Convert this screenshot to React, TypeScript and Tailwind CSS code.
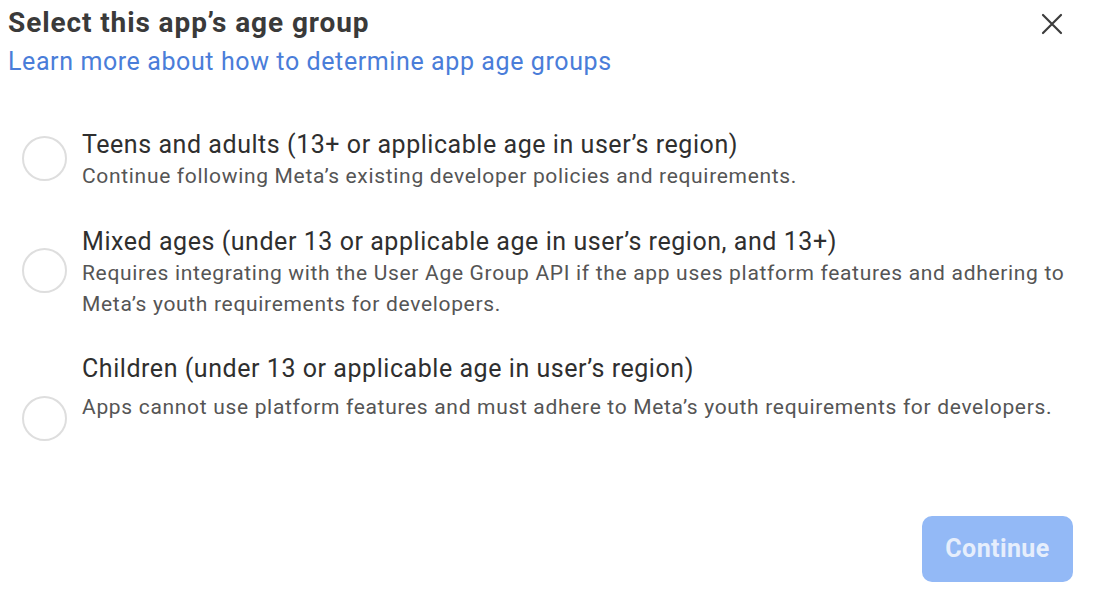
import React from "react";

const OPTIONS = [
  {
    title: "Teens and adults (13+ or applicable age in user’s region)",
    lines: ["Continue following Meta’s existing developer policies and requirements."],
  },
  {
    title: "Mixed ages (under 13 or applicable age in user’s region, and 13+)",
    lines: [
      "Requires integrating with the User Age Group API if the app uses platform features and adhering to",
      "Meta’s youth requirements for developers.",
    ],
  },
  {
    title: "Children (under 13 or applicable age in user’s region)",
    lines: ["Apps cannot use platform features and must adhere to Meta’s youth requirements for developers."],
  },
];

export default function App() {
  return (
    <div className="w-[1098px] h-[604px] bg-white flex flex-col font-['Roboto',sans-serif] overflow-hidden">
      {/* Header */}
      <div className="flex items-start justify-between pl-2 pr-[34px] pt-[1px]">
        <div>
          <h1 className="text-[28px] leading-[44px] font-bold text-[#3a3a3a] tracking-[0.9px]">
            Select this app’s age group
          </h1>
          <a className="block text-[25px] leading-[34px] text-[#4a7dd9] tracking-[0.6px]">
            Learn more about how to determine app age groups
          </a>
        </div>
        <button className="mt-[11px] w-[24px] h-[24px] flex items-center justify-center text-[#3c3c3c]">
          <svg viewBox="0 0 24 24" className="w-[24px] h-[24px]" fill="none" stroke="currentColor" strokeWidth="2.2" strokeLinecap="round">
            <path d="M3 3L21 21M21 3L3 21" />
          </svg>
        </button>
      </div>

      {/* Options */}
      <div className="flex flex-col mt-[49px] pl-[22px]">
        {OPTIONS.map((opt, i) => (
          <div key={i} className={`flex items-center gap-[15px] ${i === 1 ? "mt-[33px]" : ""} ${i === 2 ? "mt-[32px]" : ""}`}>
            <div
              className={`w-[45px] h-[45px] shrink-0 rounded-full border-2 border-[#dedede] ${i === 2 ? "self-end mb-[-18px]" : "mb-[4px]"}`}
            />
            <div className="flex flex-col">
              <div className="text-[25px] leading-[33px] text-[#2f2f2f] tracking-[0.55px]">{opt.title}</div>
              <div className={i === 2 ? "mt-[7px]" : ""}>
                {opt.lines.map((l, j) => (
                  <div key={j} className="text-[21px] leading-[31px] text-[#555] tracking-[0.68px] whitespace-nowrap">
                    {l}
                  </div>
                ))}
              </div>
            </div>
          </div>
        ))}
      </div>

      {/* Footer */}
      <div className="flex justify-end mt-auto mb-[22px] pr-[25px]">
        <button className="w-[151px] h-[66px] rounded-[10px] bg-[#93b9f6] text-[#e6eefc] text-[25px] tracking-[0.4px] font-bold">
          Continue
        </button>
      </div>
    </div>
  );
}
